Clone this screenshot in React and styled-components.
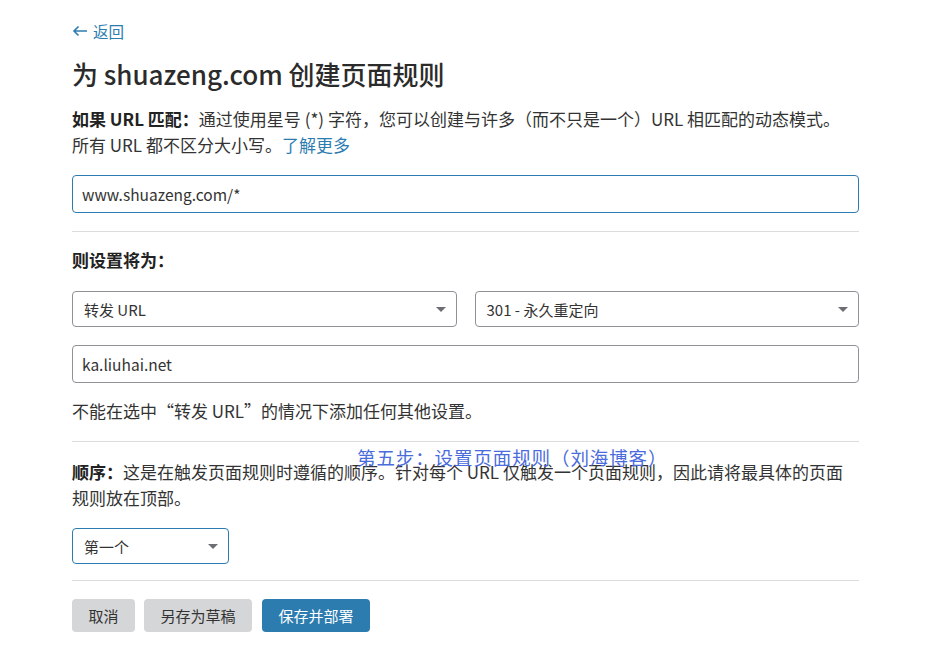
import styled, { createGlobalStyle } from "styled-components";

const Global = createGlobalStyle`
  body {
    margin: 0;
    background: #fff;
    font-family: "Noto Sans CJK SC", "Noto Sans", sans-serif;
    color: #333;
  }
`;

const Page = styled.div`
  position: relative;
  width: 787px;
  padding: 20px 0 0 72px;
`;

const Back = styled.a`
  display: flex;
  align-items: center;
  gap: 5px;
  height: 22px;
  font-size: 15.5px;
  color: #2c7cb0;
  text-decoration: none;
`;

const Title = styled.h1`
  margin: 16px 0 0;
  font-size: 26px;
  line-height: 32px;
  font-weight: 500;
  color: #2b2b2b;
`;

const Para = styled.p`
  margin: ${(p) => p.$top || 16}px 0 0;
  font-size: 17px;
  line-height: 26px;
  color: #333;
  b { font-weight: 700; color: #222; }
  a { color: #2c7cb0; text-decoration: none; }
`;

const Note = styled.p`
  margin: 16px 0 0;
  font-size: 17px;
  line-height: 24px;
`;

const Heading = styled.h3`
  margin: 16px 0 0;
  font-size: 17px;
  line-height: 24px;
  font-weight: 700;
  color: #222;
`;

const Input = styled.div`
  box-sizing: border-box;
  margin-top: ${(p) => p.$top}px;
  height: 38px;
  display: flex;
  align-items: center;
  padding: 0 9px;
  border: 1px solid ${(p) => (p.$focus ? "#2c7cb0" : "#8e9196")};
  border-radius: 4px;
  font-size: 15.5px;
  color: #333;
`;

const Row = styled.div`
  display: flex;
  gap: 18px;
  margin-top: 19px;
`;

const Select = styled.div`
  box-sizing: border-box;
  width: ${(p) => p.$w || "auto"};
  flex: ${(p) => (p.$w ? "none" : 1)};
  height: 36px;
  margin-top: ${(p) => p.$top || 0}px;
  display: flex;
  align-items: center;
  justify-content: space-between;
  padding: 0 10px 0 11px;
  border: 1px solid ${(p) => (p.$focus ? "#2c7cb0" : "#8e9196")};
  border-radius: 4px;
  font-size: 15px;
  color: #333;
`;

const Caret = styled.span`
  width: 0;
  height: 0;
  border-left: 5px solid transparent;
  border-right: 5px solid transparent;
  border-top: 5px solid #6b6e72;
`;

const Divider = styled.hr`
  margin: ${(p) => p.$top}px 0 0;
  border: 0;
  border-top: 1px solid #dcdcdc;
`;

const Buttons = styled.div`
  display: flex;
  gap: 9px;
  margin-top: 18px;
`;

const Button = styled.button`
  height: 33px;
  padding: 0 16.5px;
  border: 0;
  border-radius: 4px;
  background: ${(p) => (p.$primary ? "#2c7cb0" : "#d5d6d8")};
  color: ${(p) => (p.$primary ? "#fff" : "#333")};
  font-family: inherit;
  font-size: 15px;
  margin-left: ${(p) => (p.$primary ? 1 : 0)}px;
`;

const Watermark = styled.div`
  position: absolute;
  left: 357px;
  top: 444px;
  font-size: 18.5px;
  letter-spacing: 0.9px;
  line-height: 26px;
  color: #4a6bdc;
  white-space: nowrap;
  pointer-events: none;
`;

function Arrow() {
  return (
    <svg width="16" height="12" viewBox="0 0 16 12" fill="none" stroke="#2c7cb0" strokeWidth="1.6">
      <path d="M15 6H2M6.5 1.5L2 6l4.5 4.5" />
    </svg>
  );
}

export default function App() {
  return (
    <>
      <Global />
      <Page>
        <Back href="#"><Arrow />返回</Back>
        <Title>为 shuazeng.com 创建页面规则</Title>
        <Para>
          <b>如果 URL 匹配：</b>通过使用星号 (*) 字符，您可以创建与许多（而不只是一个）URL 相匹配的动态模式。
          <br />
          所有 URL 都不区分大小写。<a href="#">了解更多</a>
        </Para>
        <Input $top={17} $focus>www.shuazeng.com/*</Input>
        <Divider $top={18} />
        <Heading>则设置将为：</Heading>
        <Row>
          <Select>转发 URL<Caret /></Select>
          <Select>301 - 永久重定向<Caret /></Select>
        </Row>
        <Input $top={18}>ka.liuhai.net</Input>
        <Note>不能在选中“转发 URL”的情况下添加任何其他设置。</Note>
        <Divider $top={18} />
        <Para $top={17}>
          <b>顺序：</b>这是在触发页面规则时遵循的顺序。针对每个 URL 仅触发一个页面规则，因此请将最具体的页面
          <br />
          规则放在顶部。
        </Para>
        <Select $w="157px" $top={17} $focus>第一个<Caret /></Select>
        <Divider $top={16} />
        <Buttons>
          <Button>取消</Button>
          <Button>另存为草稿</Button>
          <Button $primary>保存并部署</Button>
        </Buttons>
        <Watermark>第五步：设置页面规则（刘海博客）</Watermark>
      </Page>
    </>
  );
}
